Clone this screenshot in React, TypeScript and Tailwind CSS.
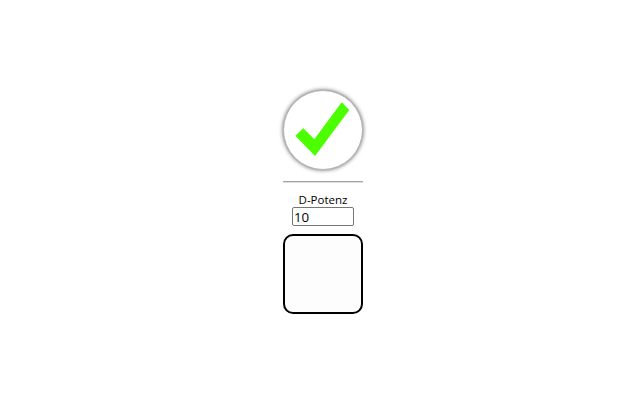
export default function App() {
  return (
    <div className="w-[640px] h-[400px] bg-white flex flex-col items-center pt-[90px] pl-[6px] font-['Open_Sans',Arial,sans-serif] text-black">
      <div className="w-[80px] flex flex-col items-center">
        <div className="w-[80px] h-[80px] rounded-full bg-white border border-[#b4b4b4] shadow-[0_0_4px_rgba(0,0,0,0.65)] flex items-center justify-center">
          <svg width="80" height="80" viewBox="0 0 80 80" className="shrink-0">
            <path d="M12.3 45.7 L20.3 38.3 L31.3 49.3 L58.7 12.3 L66.3 20 L32 66 Z" fill="#4cff00" />
          </svg>
        </div>
        <div className="w-[80px] h-[2px] border-t border-b border-t-[#a4a4a4] border-b-[#dedede] mt-[11px]" />
        <div className="text-[11.5px] leading-[14px] mt-[10px] text-center whitespace-nowrap">D-Potenz</div>
        <input
          readOnly
          value="10"
          className="w-[62px] h-[19px] border border-[#767676] rounded-[2px] px-[1px] text-[13.33px] leading-[15px] bg-white outline-none font-['Open_Sans',Arial,sans-serif]"
        />
        <div className="w-[80px] h-[80px] mt-[8px] rounded-[10px] border-2 border-black bg-[#fdfdfd]" />
      </div>
    </div>
  );
}
